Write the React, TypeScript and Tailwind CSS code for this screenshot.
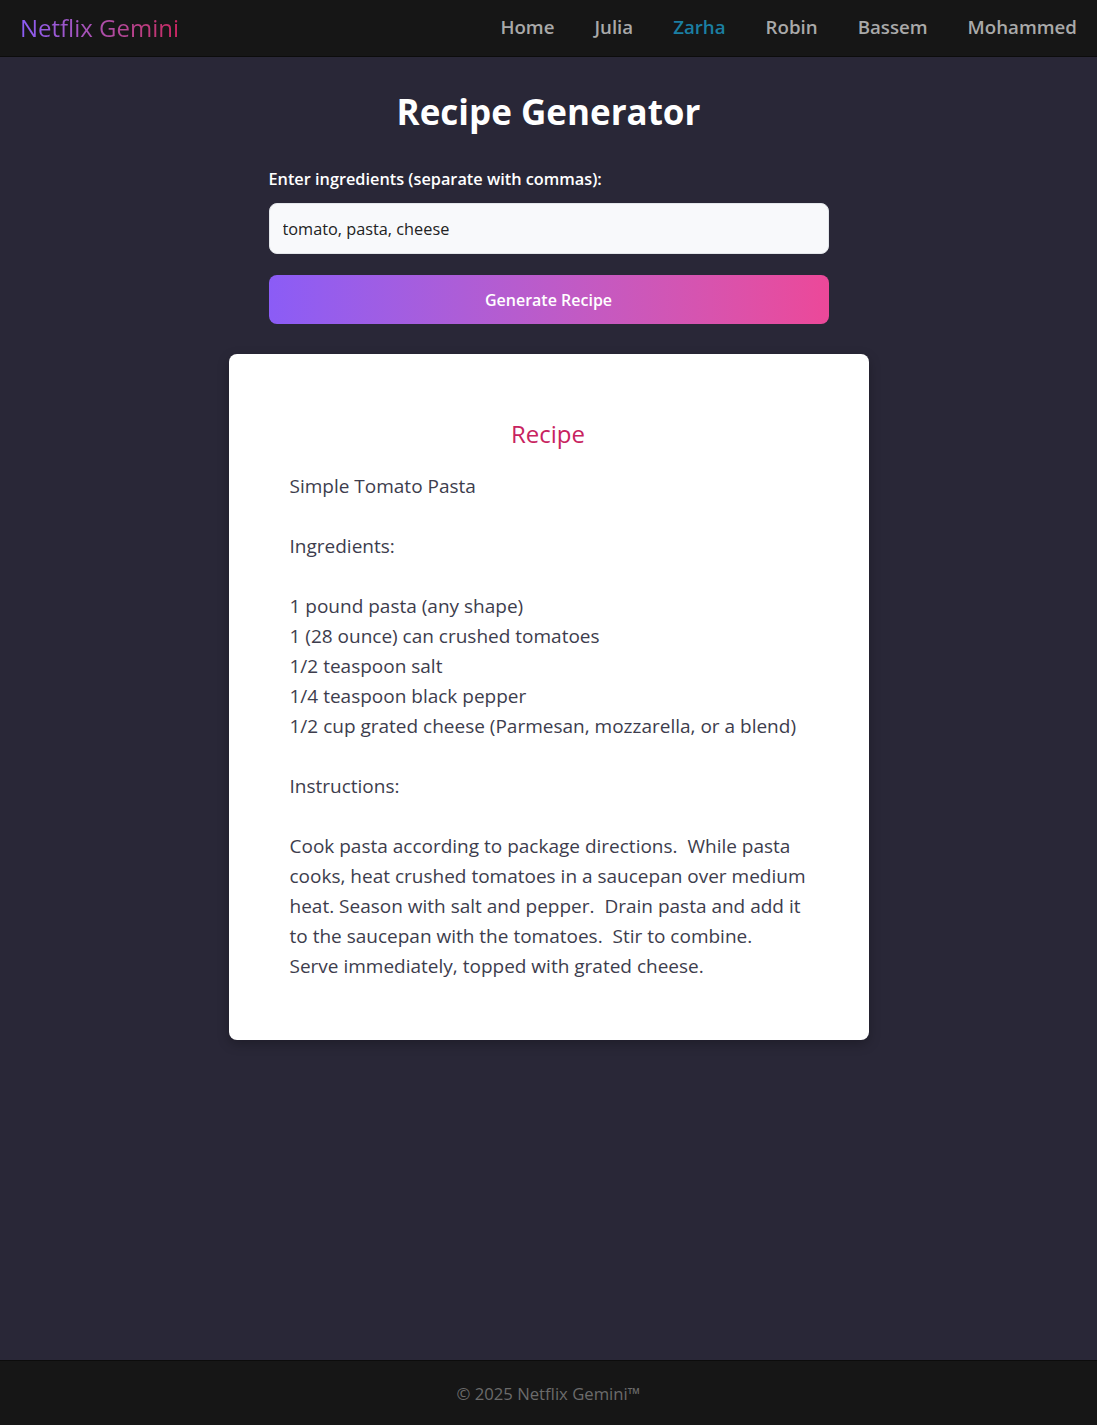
import { useState } from "react";

const links = ["Home", "Julia", "Zarha", "Robin", "Bassem", "Mohammed"];

const recipe = `Simple Tomato Pasta

Ingredients:

1 pound pasta (any shape)
1 (28 ounce) can crushed tomatoes
1/2 teaspoon salt
1/4 teaspoon black pepper
1/2 cup grated cheese (Parmesan, mozzarella, or a blend)

Instructions:

Cook pasta according to package directions.  While pasta cooks, heat crushed tomatoes in a saucepan over medium heat. Season with salt and pepper.  Drain pasta and add it to the saucepan with the tomatoes.  Stir to combine.  Serve immediately, topped with grated cheese.`;

const App = () => {
    const [ingredients, setIngredients] = useState("tomato, pasta, cheese");

    return (
        <div className="min-h-screen flex flex-col bg-[#292737] font-['Open_Sans',sans-serif]">
            {/* navbar */}
            <nav className="h-[57px] flex items-center justify-between px-5 bg-[#161616] border-b border-[#0c0c0c]">
                <span className="text-[24px] bg-gradient-to-r from-[#8b5cf6] to-[#c8235f] bg-clip-text text-transparent">
                    Netflix Gemini
                </span>
                <div className="flex gap-10 -mt-[2px]">
                    {links.map((link) => (
                        <a
                            key={link}
                            href="#"
                            className={`${link === "Zarha" ? "text-[#1b7fa3]" : "text-[#a9a9a9]"} text-[18.7px] font-semibold`}
                        >
                            {link}
                        </a>
                    ))}
                </div>
            </nav>

            <main className="flex-1 flex flex-col items-center pt-[30px]">
                <h1 className="text-[35px] font-bold text-white leading-[50px]">Recipe Generator</h1>

                <div className="w-[560px] mt-[30px] flex flex-col">
                    <label className="text-white text-[16.3px] font-semibold leading-[24px]">
                        Enter ingredients (separate with commas):
                    </label>
                    <input
                        value={ingredients}
                        onChange={(e) => setIngredients(e.target.value)}
                        className="mt-[12px] h-[51px] px-[13px] rounded-lg bg-[#f8f9fb] text-[16.3px] text-[#222] outline-none border border-[#e3e6ea]"
                    />
                    <button className="mt-[21px] h-[49px] rounded-lg bg-gradient-to-r from-[#8b5cf6] to-[#ec4899] text-white text-[16px] font-semibold">
                        Generate Recipe
                    </button>
                </div>

                <div className="w-[640px] mt-[30px] mb-[40px] bg-white rounded-lg shadow-[0_4px_12px_rgba(0,0,0,0.25)] pl-[61px] pr-[58px] pt-[62px] pb-[59px]">
                    <h2 className="mr-[4px] text-center text-[24px] text-[#c8235f] leading-[36px]">Recipe</h2>
                    <p className="mt-[19px] whitespace-pre-wrap text-[19px] leading-[30px] text-[#3d3d4d]">
                        {recipe}
                    </p>
                </div>
            </main>

            <footer className="h-[65px] flex items-center justify-center bg-[#161616] border-t border-[#0c0c0c]">
                <span className="text-[#6b6b6b] text-[16.7px] mt-[1px]">© 2025 Netflix Gemini™</span>
            </footer>
        </div>
    );
};

export default App;
